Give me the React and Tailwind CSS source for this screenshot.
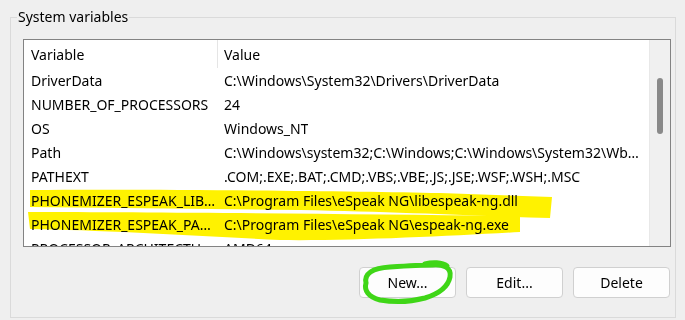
const rows = [
  ["DriverData", "C:\\Windows\\System32\\Drivers\\DriverData"],
  ["NUMBER_OF_PROCESSORS", "24"],
  ["OS", "Windows_NT"],
  ["Path", "C:\\Windows\\system32;C:\\Windows;C:\\Windows\\System32\\Wb…"],
  ["PATHEXT", ".COM;.EXE;.BAT;.CMD;.VBS;.VBE;.JS;.JSE;.WSF;.WSH;.MSC"],
  ["PHONEMIZER_ESPEAK_LIB…", "C:\\Program Files\\eSpeak NG\\libespeak-ng.dll"],
  ["PHONEMIZER_ESPEAK_PA…", "C:\\Program Files\\eSpeak NG\\espeak-ng.exe"],
  ["PROCESSOR_ARCHITECTU…", "AMD64"],
]

const Button = ({ children }) => (
  <button className="w-[97px] h-[31px] rounded-[4px] border border-[#d0d0d0] bg-[#fdfdfd] text-[14px] text-black">
    {children}
  </button>
)

const App = () => {
  return (
    <div
      className="relative w-[685px] h-[320px] overflow-hidden bg-[#efefef] text-black"
      style={{ fontFamily: '"Noto Sans", "Open Sans", sans-serif' }}
    >
      <fieldset className="ml-[10px] mt-[7px] w-[665px] h-[311px] border border-[#dadada] pl-[12px] pr-[4px]">
        <legend className="ml-[-6px] px-[1px] text-[14px] leading-[20px]">System variables</legend>

        {/* list view */}
        <div className="mt-[12px] w-[648px] h-[208px] border border-[#838383] bg-white flex overflow-hidden">
          <div className="flex-1 text-[14px]">
            <div className="flex h-[28px] items-center">
              <div className="w-[193px] pl-[7px]">Variable</div>
              <div className="w-px h-full bg-[#e5e5e5]" />
              <div className="pl-[6px]">Value</div>
            </div>
            {rows.map(([name, value]) => (
              <div key={name} className="flex h-[24px] items-center whitespace-nowrap">
                <div className="w-[194px] pl-[7px] overflow-hidden">{name}</div>
                <div className="pl-[6px] overflow-hidden">{value}</div>
              </div>
            ))}
          </div>
          <div className="w-[21px] bg-[#f0f0f0] border-l border-[#e8e8e8] pt-[38px] flex justify-center">
            <div className="w-[6px] h-[56px] rounded-[3px] bg-[#8a8a8a]" />
          </div>
        </div>

        <div className="mt-[20px] flex justify-end gap-[10px] pr-[1px]">
          <Button>New...</Button>
          <Button>Edit...</Button>
          <Button>Delete</Button>
        </div>
      </fieldset>

      {/* marker annotations */}
      <svg className="absolute inset-0 pointer-events-none mix-blend-multiply" width="685" height="320">
        <path
          d="M30,190 C150,189 350,191 440,193 L552,197 L550,218 C480,216 400,212 300,210 L30,207 Z"
          fill="#fff200"
        />
        <path
          d="M28,212 C150,212 350,214 520,216 L520,232 C450,236 350,241 280,240 C200,236 100,230 30,229 Z"
          fill="#fff200"
        />
      </svg>
      <svg className="absolute inset-0 pointer-events-none" width="685" height="320">
        <path
          d="M366,283 C364,274 372,268 390,267 C405,266 420,265 432,265 C442,264 452,267 450,277 C448,287 438,294 425,298 C410,302 392,302 380,300 C368,297 364,290 366,283 M425,264 C432,262 442,262 447,266"
          fill="none"
          stroke="#3fd617"
          strokeWidth="5"
          strokeLinecap="round"
        />
      </svg>
    </div>
  )
}

export default App
